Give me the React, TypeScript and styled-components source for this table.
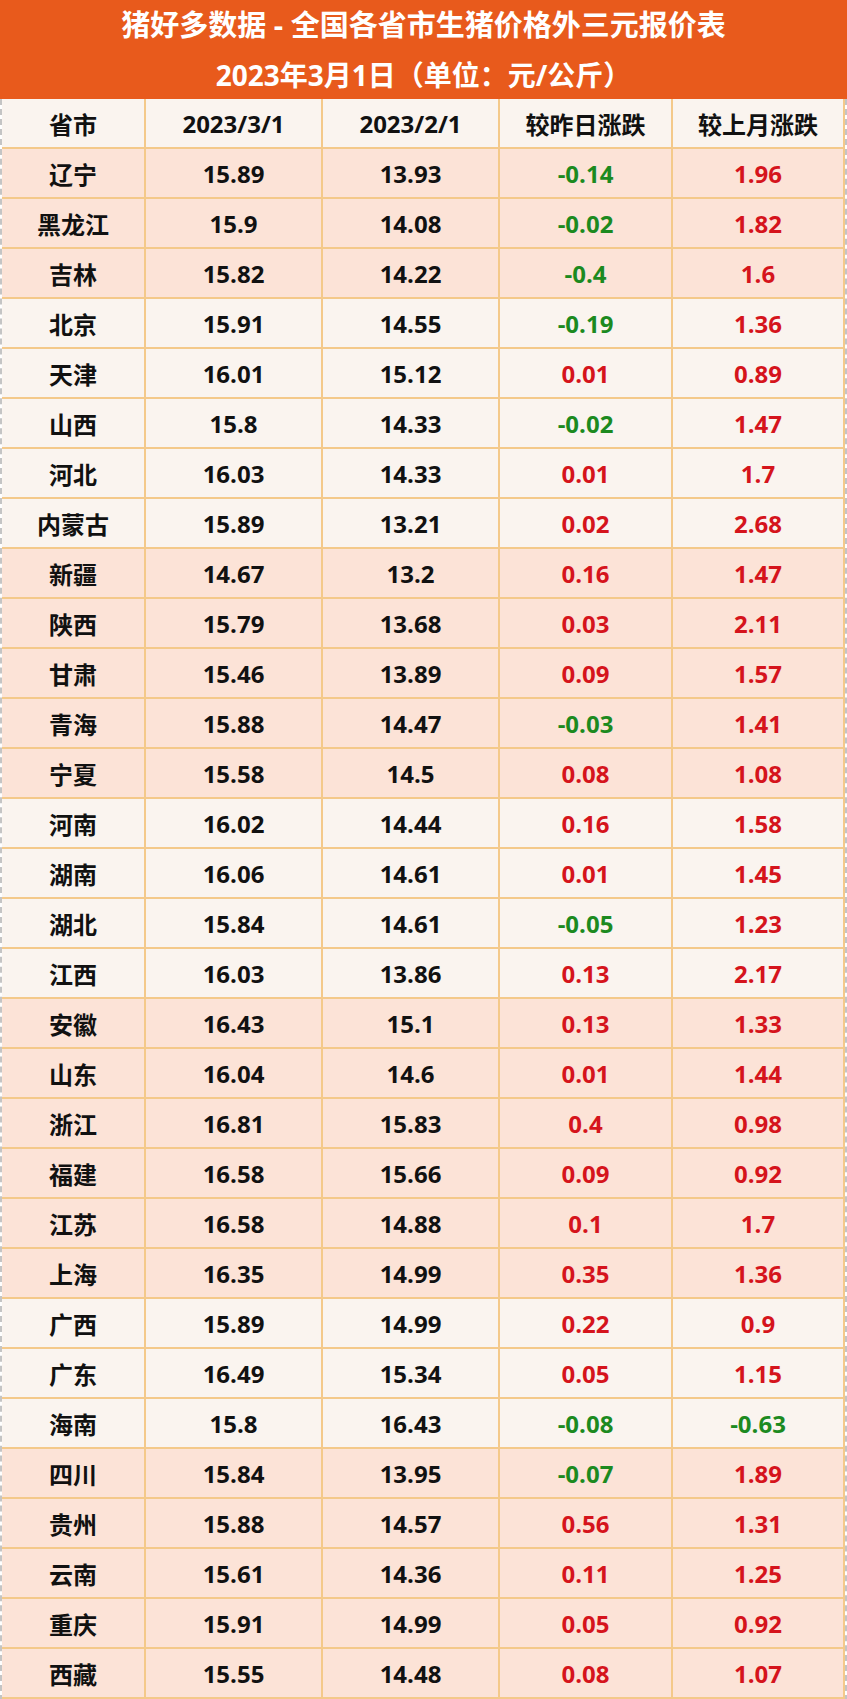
import styled, { createGlobalStyle } from "styled-components";

const GlobalStyle = createGlobalStyle`
  body {
    margin: 0;
    background: #ffffff;
  }
`;

const Sheet = styled.div`
  width: 847px;
  font-family: "Open Sans", "Noto Sans CJK SC", sans-serif;
  font-weight: 700;
  color: #111111;
`;

const Banner = styled.header`
  height: 99px;
  background: #e85a1c;
  color: #ffffff;
  display: flex;
  flex-direction: column;
  align-items: center;
`;

const BannerLine = styled.div<{ $size: number }>`
  height: 50px;
  line-height: 50px;
  font-size: ${(p) => p.$size}px;
  white-space: nowrap;
`;

const Table = styled.div`
  border-left: 2px dashed #c4c4c4;
  border-right: 2px dashed #c4c4c4;
  border-bottom: 2px dashed #c4c4c4;
`;

const Row = styled.div<{ $shade: "pink" | "light" }>`
  display: grid;
  grid-template-columns: 144px 177px 177px 173px 172px;
  height: 50px;
  background: ${(p) => (p.$shade === "pink" ? "#fce3d7" : "#faf4ef")};
`;

const Cell = styled.div<{ $tone?: "up" | "down" }>`
  box-sizing: border-box;
  display: flex;
  align-items: center;
  justify-content: center;
  border-right: 2px solid #f4c98a;
  border-bottom: 2px solid #f4c98a;
  font-size: 24px;
  color: ${(p) => (p.$tone === "up" ? "#d5141c" : p.$tone === "down" ? "#1c8a1f" : "#111111")};
`;

type Quote = [string, string, string, string, string, "pink" | "light"];

const quotes: Quote[] = [
  ["辽宁", "15.89", "13.93", "-0.14", "1.96", "pink"],
  ["黑龙江", "15.9", "14.08", "-0.02", "1.82", "pink"],
  ["吉林", "15.82", "14.22", "-0.4", "1.6", "pink"],
  ["北京", "15.91", "14.55", "-0.19", "1.36", "light"],
  ["天津", "16.01", "15.12", "0.01", "0.89", "light"],
  ["山西", "15.8", "14.33", "-0.02", "1.47", "light"],
  ["河北", "16.03", "14.33", "0.01", "1.7", "light"],
  ["内蒙古", "15.89", "13.21", "0.02", "2.68", "light"],
  ["新疆", "14.67", "13.2", "0.16", "1.47", "pink"],
  ["陕西", "15.79", "13.68", "0.03", "2.11", "pink"],
  ["甘肃", "15.46", "13.89", "0.09", "1.57", "pink"],
  ["青海", "15.88", "14.47", "-0.03", "1.41", "pink"],
  ["宁夏", "15.58", "14.5", "0.08", "1.08", "pink"],
  ["河南", "16.02", "14.44", "0.16", "1.58", "light"],
  ["湖南", "16.06", "14.61", "0.01", "1.45", "light"],
  ["湖北", "15.84", "14.61", "-0.05", "1.23", "light"],
  ["江西", "16.03", "13.86", "0.13", "2.17", "light"],
  ["安徽", "16.43", "15.1", "0.13", "1.33", "pink"],
  ["山东", "16.04", "14.6", "0.01", "1.44", "pink"],
  ["浙江", "16.81", "15.83", "0.4", "0.98", "pink"],
  ["福建", "16.58", "15.66", "0.09", "0.92", "pink"],
  ["江苏", "16.58", "14.88", "0.1", "1.7", "pink"],
  ["上海", "16.35", "14.99", "0.35", "1.36", "pink"],
  ["广西", "15.89", "14.99", "0.22", "0.9", "light"],
  ["广东", "16.49", "15.34", "0.05", "1.15", "light"],
  ["海南", "15.8", "16.43", "-0.08", "-0.63", "light"],
  ["四川", "15.84", "13.95", "-0.07", "1.89", "pink"],
  ["贵州", "15.88", "14.57", "0.56", "1.31", "pink"],
  ["云南", "15.61", "14.36", "0.11", "1.25", "pink"],
  ["重庆", "15.91", "14.99", "0.05", "0.92", "pink"],
  ["西藏", "15.55", "14.48", "0.08", "1.07", "pink"],
];

const toneOf = (v: string) => (v.startsWith("-") ? "down" : "up");

export default function App() {
  return (
    <>
      <GlobalStyle />
      <Sheet>
        <Banner>
          <BannerLine $size={29}>猪好多数据 - 全国各省市生猪价格外三元报价表</BannerLine>
          <BannerLine $size={28}>2023年3月1日（单位：元/公斤）</BannerLine>
        </Banner>
        <Table>
          <Row $shade="light">
            <Cell>省市</Cell>
            <Cell>2023/3/1</Cell>
            <Cell>2023/2/1</Cell>
            <Cell>较昨日涨跌</Cell>
            <Cell>较上月涨跌</Cell>
          </Row>
          {quotes.map(([name, now, last, day, month, shade]) => (
            <Row key={name} $shade={shade}>
              <Cell>{name}</Cell>
              <Cell>{now}</Cell>
              <Cell>{last}</Cell>
              <Cell $tone={toneOf(day)}>{day}</Cell>
              <Cell $tone={toneOf(month)}>{month}</Cell>
            </Row>
          ))}
        </Table>
      </Sheet>
    </>
  );
}
